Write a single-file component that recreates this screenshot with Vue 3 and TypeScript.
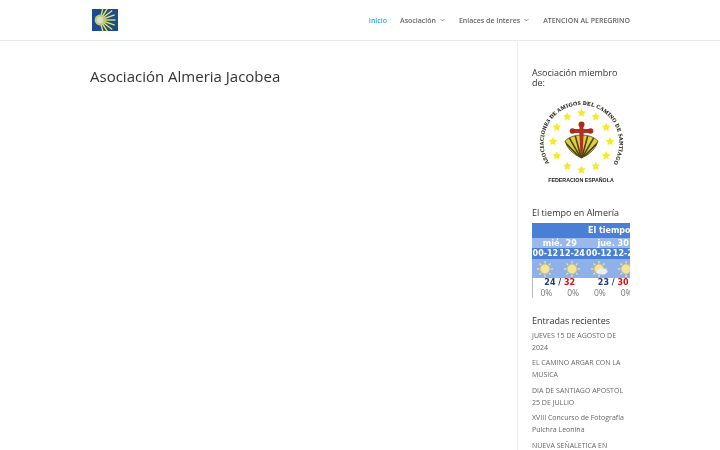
<script setup lang="ts">
const navItems = [
  { label: "Inicio", active: true, caret: false },
  { label: "Asociación", active: false, caret: true },
  { label: "Enlaces de Interes", active: false, caret: true },
  { label: "ATENCION AL PEREGRINO", active: false, caret: false },
];

const posts = [
  "JUEVES 15 DE AGOSTO DE 2024",
  "EL CAMINO ARGAR CON LA MUSICA",
  "DIA DE SANTIAGO APOSTOL 25 DE JULLIO",
  "XVIII Concurso de Fotografía Pulchra Leonina",
  "NUEVA SEÑALETICA EN ALMERIA",
];

const days = ["mié. 29", "jue. 30"];
const hours = ["00-12", "12-24", "00-12", "12-24"];
const temps = [
  { low: 24, high: 32 },
  { low: 23, high: 30 },
];
const rain = ["0%", "0%", "0%", "0%"];
const cloudy = [false, false, true, false];

const rays = Array.from({ length: 9 }, (_, i) => -76 + i * 19);
const stars = Array.from({ length: 12 }, (_, i) => {
  const a = (i * 30 * Math.PI) / 180;
  return { x: 49.5 + 28.5 * Math.sin(a), y: 45.5 - 28.5 * Math.cos(a) };
});
const sunRays = Array.from({ length: 8 }, (_, i) => i * 45);
const ribs = Array.from({ length: 9 }, (_, i) => -60 + i * 15);

function starPoints(cx: number, cy: number, r: number) {
  const pts: string[] = [];
  for (let i = 0; i < 10; i++) {
    const rad = i % 2 ? r * 0.48 : r;
    const a = (i * 36 * Math.PI) / 180;
    pts.push(`${(cx + rad * Math.sin(a)).toFixed(2)},${(cy - rad * Math.cos(a)).toFixed(2)}`);
  }
  return pts.join(" ");
}
</script>

<template>
  <div class="page">
    <header class="header">
      <div class="wrap headerRow">
        <svg class="logo" viewBox="0 0 26 22" aria-label="Logo">
          <rect width="26" height="22" fill="#1c4b93" />
          <line
            v-for="r in rays"
            :key="r"
            x1="8"
            y1="11"
            :x2="8 + 15.5 * Math.cos((r * Math.PI) / 180)"
            :y2="11 + 15.5 * Math.sin((r * Math.PI) / 180)"
            stroke="#e6e65a"
            stroke-width="1.4"
          />
          <circle cx="8" cy="11" r="5.4" fill="#c9c96a" />
          <circle cx="8" cy="11" r="3.2" fill="#d5dadb" />
        </svg>
        <nav class="nav">
          <a v-for="item in navItems" :key="item.label" class="navLink" :class="{ active: item.active }">
            {{ item.label }}
            <svg v-if="item.caret" class="caret" viewBox="0 0 8 5">
              <path d="M1 1l3 3 3-3" fill="none" stroke="currentColor" stroke-width="1.2" />
            </svg>
          </a>
        </nav>
      </div>
    </header>

    <div class="wrap body">
      <main class="content">
        <h1>Asociación Almeria Jacobea</h1>
      </main>

      <aside class="sidebar">
        <section class="widget">
          <h4>Asociación miembro de:</h4>
          <svg class="badge" viewBox="0 0 98 92" aria-label="Federación Española">
            <defs>
              <path id="ringText" d="M 17.3 67 A 38 38 0 1 1 81.7 67" />
              <clipPath id="shellClip">
                <path d="M33 45 Q39 39 49.5 39 Q60 39 66 45 Q63 56 49.5 62 Q36 56 33 45Z" />
              </clipPath>
            </defs>
            <text class="ring" textLength="162" lengthAdjust="spacing">
              <textPath href="#ringText">ASOCIACIONES DE AMIGOS DEL CAMINO DE SANTIAGO</textPath>
            </text>
            <polygon
              v-for="(s, i) in stars"
              :key="i"
              :points="starPoints(s.x, s.y, 4.6)"
              fill="#f6e92a"
            />
            <path d="M33 45 Q39 39 49.5 39 Q60 39 66 45 Q63 56 49.5 62 Q36 56 33 45Z" fill="#e0d040" stroke="#3d3a10" stroke-width=".7" />
            <g clip-path="url(#shellClip)">
              <line
                v-for="r in ribs"
                :key="r"
                x1="49.5"
                y1="63"
                :x2="49.5 + 30 * Math.sin((r * Math.PI) / 180)"
                :y2="63 - 30 * Math.cos((r * Math.PI) / 180)"
                stroke="#4a4612"
                stroke-width="1.6"
              />
            </g>
            <path d="M47.5 29h4v4h7v4h-6.8l-1.2 21-1 2-1-2-1.2-21h-7.3v-4h7.5z" fill="#b23122" />
            <circle cx="49.5" cy="28.5" r="3" fill="#ab2c1e" />
            <circle cx="40.5" cy="35" r="2.8" fill="#ab2c1e" />
            <circle cx="58.5" cy="35" r="2.8" fill="#ab2c1e" />
            <text x="49" y="86" class="fed" text-anchor="middle">FEDERACION ESPAÑOLA</text>
          </svg>
        </section>

        <section class="widget weatherWidget">
          <h4>El tiempo en Almería</h4>
          <div class="weather">
            <div class="wInner">
              <div class="wTitle">El tiempo en Almería</div>
              <div class="wDays">
                <span v-for="d in days" :key="d">{{ d }}</span>
              </div>
              <div class="wHours">
                <span v-for="(h, i) in hours" :key="i">{{ h }}</span>
              </div>
              <div class="wIcons">
                <span v-for="(c, i) in cloudy" :key="i" class="wIcon">
                  <svg viewBox="0 0 20 20" width="20" height="20">
                    <line
                      v-for="a in sunRays"
                      :key="a"
                      x1="10"
                      y1="2"
                      x2="10"
                      y2="4.5"
                      stroke="#efe3a0"
                      stroke-width="1.3"
                      :transform="`rotate(${a} 10 10)`"
                    />
                    <circle cx="10" cy="10" r="4.6" fill="#f6e694" stroke="#e6cf6a" stroke-width=".8" />
                    <ellipse v-if="c" cx="13" cy="12.5" rx="5.5" ry="3" fill="#e8eef7" />
                  </svg>
                </span>
              </div>
              <div class="wBottom">
                <div class="wTemps">
                  <span v-for="t in temps" :key="t.low" class="wTemp">{{ t.low }} / <b class="high">{{ t.high }}</b></span>
                </div>
                <div class="wRain">
                  <span v-for="(r, i) in rain" :key="i">{{ r }}</span>
                </div>
              </div>
            </div>
          </div>
        </section>

        <section class="widget recent">
          <h4>Entradas recientes</h4>
          <ul class="posts">
            <li v-for="p in posts" :key="p">{{ p }}</li>
          </ul>
        </section>
      </aside>
    </div>
  </div>
</template>

<style>
html,
body {
  margin: 0;
  height: 450px;
  overflow: hidden;
  background: #fff;
}
</style>

<style scoped>
.page {
  font-family: "Open Sans", sans-serif;
  color: #666;
  height: 450px;
  overflow: hidden;
  filter: blur(0.25px);
}

.wrap {
  width: 540px;
  margin: 0 auto;
}

.header {
  height: 40px;
  box-shadow: 0 1px 0 rgba(0, 0, 0, 0.08);
}

.headerRow {
  display: flex;
  justify-content: space-between;
  align-items: center;
  height: 40px;
}

.logo {
  width: 26px;
  height: 22px;
  margin-left: 2px;
}

.nav {
  display: flex;
  gap: 13px;
  align-items: center;
}

.navLink {
  font-size: 7px;
  font-weight: 600;
  color: #666;
  display: flex;
  align-items: center;
  white-space: nowrap;
}

.navLink.active {
  color: #2ea3f2;
}

.caret {
  width: 5px;
  height: 4px;
  margin-left: 4px;
  margin-right: 1px;
}

.body {
  display: flex;
  height: 410px;
}

.content {
  width: 427px;
  flex: none;
}

h1 {
  margin: 26px 0 0;
  font-size: 15px;
  line-height: 20px;
  font-weight: 400;
  color: #333;
}

.sidebar {
  flex: 1;
  min-width: 0;
  border-left: 1px solid #ececec;
  padding: 28px 0 0 14px;
}

h4 {
  margin: 0;
  font-size: 9px;
  line-height: 9.5px;
  font-weight: 400;
  color: #333;
}

.badge {
  display: block;
  width: 98px;
  height: 92px;
  margin-top: 9px;
}

.ring {
  font-size: 5.4px;
  font-weight: 700;
  font-family: "Liberation Serif", serif;
  fill: #1f1d10;
  stroke: #1f1d10;
  stroke-width: 0.15;
}

.fed {
  font-size: 5.3px;
  font-weight: 700;
  font-family: "Liberation Sans", sans-serif;
  fill: #222;
}

.weatherWidget {
  margin-top: 18px;
}

.weatherWidget h4,
.recent h4 {
  line-height: 14px;
}

.weather {
  width: 98px;
  height: 75px;
  margin-top: 3px;
  overflow: hidden;
  font-family: "DejaVu Sans", sans-serif;
  font-size: 8px;
}

.wInner {
  width: 214px;
}

.wTitle {
  height: 15px;
  line-height: 15px;
  padding-left: 56px;
  background: #4a7fd6;
  color: #fff;
  font-weight: 700;
}

.wDays {
  display: flex;
  height: 10px;
  line-height: 10px;
  padding-left: 1px;
  background: #9ab8ea;
  color: #fff;
  font-weight: 700;
}

.wDays span {
  width: 53.5px;
  text-align: center;
  flex: none;
  font-size: 8.2px;
}

.wHours {
  display: flex;
  height: 11px;
  line-height: 11px;
  background: #4a7fd6;
  color: #fff;
  font-weight: 700;
}

.wHours span,
.wRain span,
.wIcon {
  width: 26.75px;
  text-align: center;
  flex: none;
  white-space: nowrap;
}

.wIcons {
  display: flex;
  height: 19px;
  background: #8fb0e8;
  overflow: hidden;
}

.wIcon {
  display: flex;
  justify-content: center;
  align-items: center;
}

.wBottom {
  border-left: 1px solid #b4bac6;
  height: 20px;
}

.wTemps {
  display: flex;
  height: 10px;
  line-height: 10px;
  color: #1f3d7a;
  font-weight: 700;
}

.wTemp {
  width: 53.5px;
  text-align: center;
  flex: none;
  white-space: pre;
}

.high {
  color: #d0141a;
}

.wRain {
  display: flex;
  height: 10px;
  line-height: 10px;
  color: #777;
  font-family: "Open Sans", sans-serif;
  font-size: 8.5px;
}

.recent {
  margin-top: 16px;
}

.posts {
  list-style: none;
  margin: 2px 0 0;
  padding: 0;
  font-size: 7px;
  line-height: 12px;
  color: #666;
}

.posts li {
  margin-bottom: 3.4px;
}
</style>
